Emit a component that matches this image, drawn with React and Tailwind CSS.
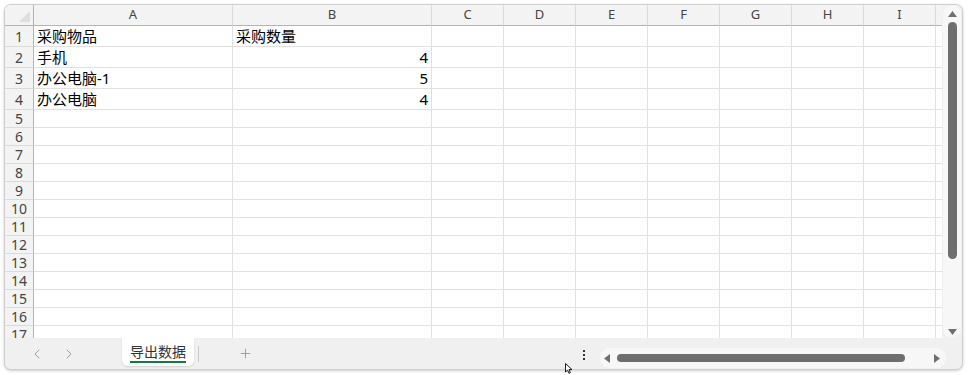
import React from "react";
import { ChevronLeft, ChevronRight, Plus } from "lucide-react";

const cols = ["A", "B", "C", "D", "E", "F", "G", "H", "I"];

const data = {
  1: ["采购物品", "采购数量"],
  2: ["手机", 4],
  3: ["办公电脑-1", 5],
  4: ["办公电脑", 4],
};

const rows = Array.from({ length: 17 }, (_, i) => i + 1);

const TriUp = () => (
  <svg width="9" height="6" viewBox="0 0 9 6">
    <path d="M4.5 0 L9 6 L0 6 Z" fill="#6f6f6f" />
  </svg>
);
const TriDown = () => (
  <svg width="9" height="6" viewBox="0 0 9 6">
    <path d="M0 0 L9 0 L4.5 6 Z" fill="#6f6f6f" />
  </svg>
);
const TriLeft = () => (
  <svg width="6" height="9" viewBox="0 0 6 9">
    <path d="M6 0 L6 9 L0 4.5 Z" fill="#6f6f6f" />
  </svg>
);
const TriRight = () => (
  <svg width="6" height="9" viewBox="0 0 6 9">
    <path d="M0 0 L6 4.5 L0 9 Z" fill="#6f6f6f" />
  </svg>
);

const Sheet = () => {
  return (
    <div className="grid grid-cols-[29px_199px_199px_repeat(7,72px)_6px] content-start overflow-hidden h-[333px] bg-white">
      {/* header row */}
      <div className="h-[21px] bg-[#f3f3f3] border-r border-b border-[#b4b4b4] relative">
        <svg className="absolute right-[3px] bottom-[3px]" width="11" height="11" viewBox="0 0 11 11">
          <path d="M11 0 L11 11 L0 11 Z" fill="#dedede" />
        </svg>
      </div>
      {cols.map((c) => (
        <div
          key={c}
          className="h-[21px] bg-[#f3f3f3] border-r border-r-[#dadada] border-b border-b-[#b4b4b4] flex items-center justify-center text-[13px] text-[#444]"
        >
          {c}
        </div>
      ))}
      <div className="h-[21px] bg-[#f3f3f3] border-b border-[#b4b4b4]" />

      {rows.map((r) => {
        const h = r <= 4 ? "h-[21px]" : "h-[18px]";
        const d = data[r] || [];
        return (
          <React.Fragment key={r}>
            <div
              className={`${h} bg-[#f3f3f3] border-r border-r-[#b4b4b4] border-b border-b-[#dadada] flex items-center justify-center text-[14px] text-[#444]`}
            >
              {r}
            </div>
            {cols.map((c, ci) => {
              const v = d[ci];
              const isNum = typeof v === "number";
              return (
                <div
                  key={c}
                  className={`${h} border-r border-b border-[#e1e1e1] flex items-center px-[3px] text-[15px] text-black whitespace-nowrap ${
                    isNum ? "justify-end" : "justify-start"
                  }`}
                >
                  {v}
                </div>
              );
            })}
            <div className={`${h} border-b border-[#e1e1e1]`} />
          </React.Fragment>
        );
      })}
    </div>
  );
};

const VScroll = () => (
  <div className="w-[20px] h-[333px] bg-[#f0f0f0] flex">
    <div className="w-[18px] mx-[1px] h-full rounded-full bg-[#f7f7f7] flex flex-col items-center">
      <div className="mt-[6px]">
        <TriUp />
      </div>
      <div className="mt-[5px] w-[9px] h-[237px] rounded-full bg-[#6e6e6e]" />
      <div className="mt-auto mb-[3px]">
        <TriDown />
      </div>
    </div>
  </div>
);

const App = () => {
  return (
    <div
      className="w-[968px] h-[375px] bg-white pt-[4px] pl-[4px] relative"
      style={{ fontFamily: '"Noto Sans", "Noto Sans CJK SC", sans-serif' }}
    >
      <div className="w-[959px] h-[366px] rounded-[7px] border border-[#cfcfcf] bg-[#f0f0f0] shadow-[0_1px_3px_rgba(0,0,0,0.2)] overflow-hidden flex flex-col">
        <div className="flex">
          <Sheet />
          <VScroll />
        </div>

        {/* bottom bar */}
        <div className="h-[31px] flex items-start">
          <div className="w-[117px] h-full flex items-center pl-[16px] text-[#999]">
            <div className="w-[32px] flex justify-center">
              <ChevronLeft size={16} strokeWidth={1.4} />
            </div>
            <div className="w-[32px] flex justify-center">
              <ChevronRight size={16} strokeWidth={1.4} />
            </div>
          </div>
          <div className="w-[72px] h-[28px] bg-white rounded-b-[6px] shadow-[0_1px_2px_rgba(0,0,0,0.12)] flex flex-col items-center">
            <div
              className="mt-[4px] text-[14px] leading-[18px] text-[#333]"
              style={{ fontFamily: '"Noto Sans CJK SC", sans-serif' }}
            >
              导出数据
            </div>
            <div className="mt-[1px] w-[56px] h-[2px] bg-[#107c41]" />
          </div>
          <div className="ml-[4px] mt-[8px] w-px h-[16px] bg-[#c9c9c9]" />
          <div className="ml-[30px] w-[32px] h-full flex items-center justify-center text-[#8c8c8c]">
            <Plus size={15} strokeWidth={1.25} />
          </div>
          <div className="flex-1" />
          <div className="w-[12px] h-full flex flex-col items-center justify-center gap-[2px] pt-[2px]">
            <div className="w-[2px] h-[2px] bg-[#333]" />
            <div className="w-[2px] h-[2px] bg-[#333]" />
            <div className="w-[2px] h-[2px] bg-[#333]" />
          </div>
          <div className="ml-[10px] mr-[16px] mt-[10px] w-[346px] h-[20px] rounded-full bg-[#f7f7f7] flex items-center pl-[4px] pr-[6px]">
            <TriLeft />
            <div className="ml-[7px] w-[288px] h-[8px] rounded-full bg-[#6e6e6e]" />
            <div className="ml-auto">
              <TriRight />
            </div>
          </div>
        </div>
      </div>

      {/* mouse cursor */}
      <svg className="absolute left-[565px] top-[363px]" width="8" height="11" viewBox="0 0 8 11">
        <path d="M0.5 0.5 L0.5 9 L2.6 7.1 L4 10.3 L5.4 9.7 L4 6.6 L7 6.6 Z" fill="white" stroke="black" strokeWidth="0.9" />
      </svg>
    </div>
  );
};

export default App;
